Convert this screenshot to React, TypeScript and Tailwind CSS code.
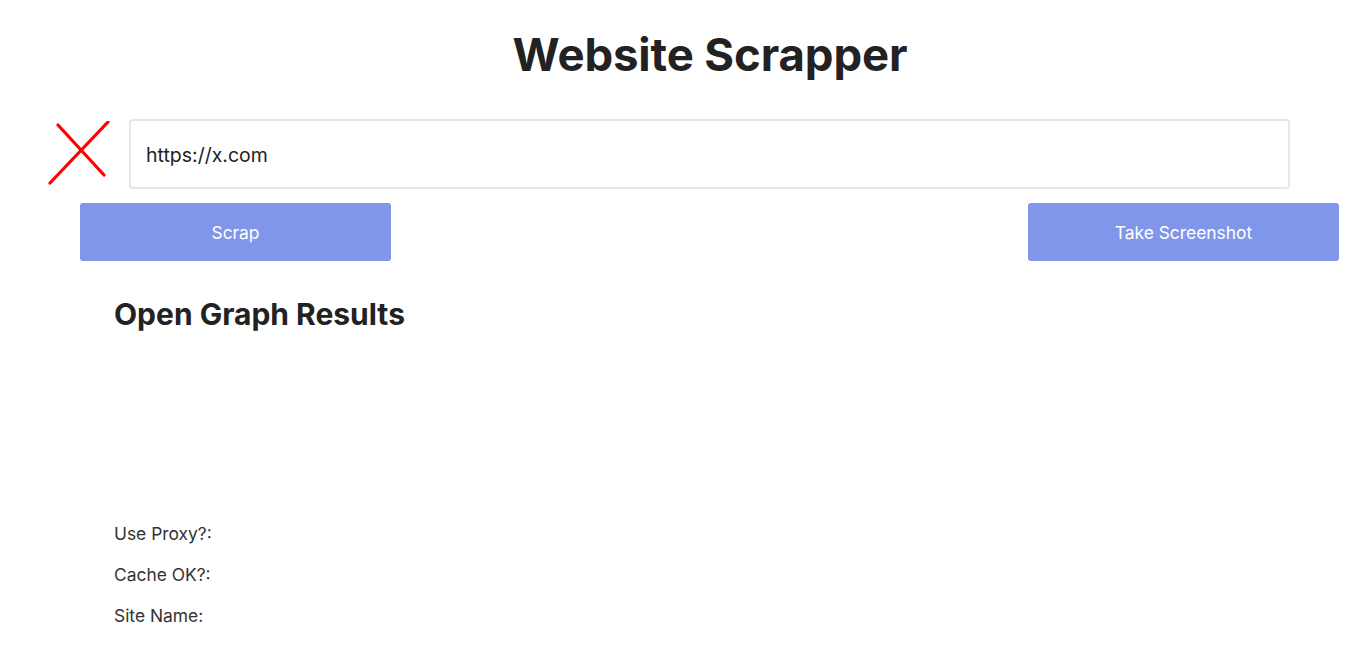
import React from "react";

export default function App() {
  return (
    <div className="min-h-[652px] w-[1368px] bg-white text-[#222] font-['Inter','Noto_Sans',sans-serif]">
      <h1 className="pt-[27px] text-center pl-[52px] text-[45.5px] leading-[56px] font-bold tracking-[-0.1px] text-[#222]">
        Website Scrapper
      </h1>
      <div className="mt-[36px] flex items-center pl-[48px] pr-[78px]">
        <svg width="62" height="66" viewBox="0 0 62 66" className="shrink-0">
          <line x1="2" y1="62" x2="60" y2="1" stroke="#ff0000" strokeWidth="3.2" strokeLinecap="round" />
          <line x1="10" y1="4" x2="56" y2="54" stroke="#ff0000" strokeWidth="3.2" strokeLinecap="round" />
        </svg>
        <div className="ml-[19px] flex h-[70px] flex-1 items-center rounded-[4px] border-2 border-[#e6e6e6] px-[15px] pt-[3px] text-[19.5px] text-[#222]">
          https://x.com
        </div>
      </div>
      <div className="mt-[14px] flex justify-between pl-[80px] pr-[29px]">
        <button className="h-[58px] w-[311px] rounded-[3px] bg-[#7f96eb] pt-[2px] text-[17.4px] text-white">Scrap</button>
        <button className="h-[58px] w-[311px] rounded-[3px] bg-[#7f96eb] pt-[2px] text-[17.4px] text-white">Take Screenshot</button>
      </div>
      <h2 className="mt-[35px] pl-[114px] text-[30px] leading-[36px] font-bold text-[#222]">Open Graph Results</h2>
      <div className="mt-[192px] flex flex-col gap-[21px] pl-[114px] text-[17.4px] leading-[20px] text-[#333]">
        <div>Use Proxy?:</div>
        <div>Cache OK?:</div>
        <div>Site Name:</div>
      </div>
    </div>
  );
}
